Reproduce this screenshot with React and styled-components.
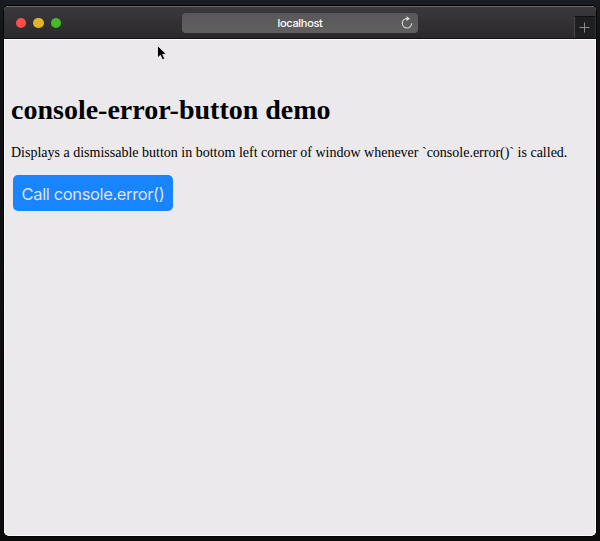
import React from "react";
import styled, { createGlobalStyle } from "styled-components";

const GlobalStyle = createGlobalStyle`
  * { box-sizing: border-box; }
  body { margin: 0; background: #111214; }
`;

const Desktop = styled.div`
  position: relative;
  height: 541px;
  padding: 6px 4px 5px;
  overflow: hidden;
  background: linear-gradient(#1b1c21 0, #111214 40px, #0c0c0d 100%);
`;

const BrowserWindow = styled.div`
  display: flex;
  flex-direction: column;
  height: 530px;
  border-radius: 5px;
  overflow: hidden;
  background: #ebe9eb;
  box-shadow: 0 0 0 1px #050505;
`;

const TitleBar = styled.header`
  display: grid;
  grid-template-columns: 178px 236px 1fr;
  flex: none;
  height: 33px;
  border-top: 1px solid #666467;
  border-bottom: 1px solid #111;
  background: linear-gradient(#3a383a, #2b292b);
`;

const TrafficLights = styled.div`
  display: flex;
  align-items: center;
  gap: 7px;
  padding: 1px 0 0 11.5px;
`;

const Light = styled.span`
  width: 10.5px;
  height: 10.5px;
  border-radius: 50%;
  background: ${({ $color }) => $color};
`;

const AddressBar = styled.div`
  display: grid;
  grid-template-columns: 20px 1fr 20px;
  align-items: center;
  height: 20px;
  margin-top: 6px;
  border-radius: 4px;
  background: linear-gradient(#595759, #616061);
  color: #fff;
  font: 500 11px/20px Inter, sans-serif;
  letter-spacing: -0.3px;
  text-align: center;
`;

const Address = styled.span`
  grid-column: 2;
`;

const ReloadIcon = styled.svg`
  width: 14px;
  height: 14px;
  margin-left: 2px;
`;

const NewTab = styled.div`
  display: grid;
  place-items: center;
  align-self: end;
  justify-self: end;
  width: 22px;
  height: 22px;
  padding-right: 1px;
  border-top: 1px solid #111113;
  border-left: 1px solid #464446;
  border-right: 1px solid #363436;
  background: #1f1e20;
`;

const PlusIcon = styled.svg`
  width: 11px;
  height: 11px;
`;

const Page = styled.main`
  flex: 1;
  padding: 53px 6px 0;
  border: 1px solid #fafafa;
  border-radius: 0 0 5px 5px;
  border-left-color: #f4f3f4;
  color: #000;
  font-family: "Liberation Serif", serif;
`;

const Title = styled.h1`
  margin: 0;
  font-size: 28px;
  line-height: 33px;
  white-space: nowrap;
`;

const Description = styled.p`
  margin: 19px 0 0;
  font-size: 14px;
  line-height: 16px;
  white-space: nowrap;
`;

const ErrorButton = styled.button`
  display: block;
  width: 160px;
  height: 36px;
  margin: 14px 0 0 2px;
  padding: 1px 0 0;
  border: 0;
  border-radius: 5px;
  background: #1984ff;
  color: #dfe2e8;
  font: 16.5px/36px Inter, sans-serif;
  letter-spacing: -0.37px;
  white-space: nowrap;
`;

const Pointer = styled.svg`
  position: absolute;
  top: 44px;
  left: 155px;
  width: 14px;
  height: 19px;
`;

export default function App() {
  return (
    <Desktop>
      <GlobalStyle />
      <BrowserWindow>
        <TitleBar>
          <TrafficLights>
            <Light $color="#fc4e49" />
            <Light $color="#e2b529" />
            <Light $color="#42bb2b" />
          </TrafficLights>
          <AddressBar>
            <Address>localhost</Address>
            <ReloadIcon viewBox="0 0 14 14">
              <path d="M7 2.6A4.7 4.7 0 1 0 11.7 7.3" fill="none" stroke="#d2d2d2" strokeWidth="1.2" />
              <path d="M6.5 .3 10 2.7 6.5 5Z" fill="#dedede" />
            </ReloadIcon>
          </AddressBar>
          <NewTab>
            <PlusIcon viewBox="0 0 11 11">
              <path d="M5.5 .5V10.5M.5 5.5H10.5" stroke="#8b898b" strokeWidth="1" />
            </PlusIcon>
          </NewTab>
        </TitleBar>
        <Page>
          <Title>console-error-button demo</Title>
          <Description>
            Displays a dismissable button in bottom left corner of window whenever `console.error()` is called.
          </Description>
          <ErrorButton type="button">Call console.error()</ErrorButton>
        </Page>
      </BrowserWindow>
      <Pointer viewBox="0 0 14 19">
        <path
          d="M2.5 1.5V14L5.4 11.3 7.3 15.8 9.7 14.7 7.7 10.3H11.5Z"
          fill="#000"
          stroke="#fff"
          strokeWidth="0.8"
          strokeLinejoin="round"
        />
      </Pointer>
    </Desktop>
  );
}
